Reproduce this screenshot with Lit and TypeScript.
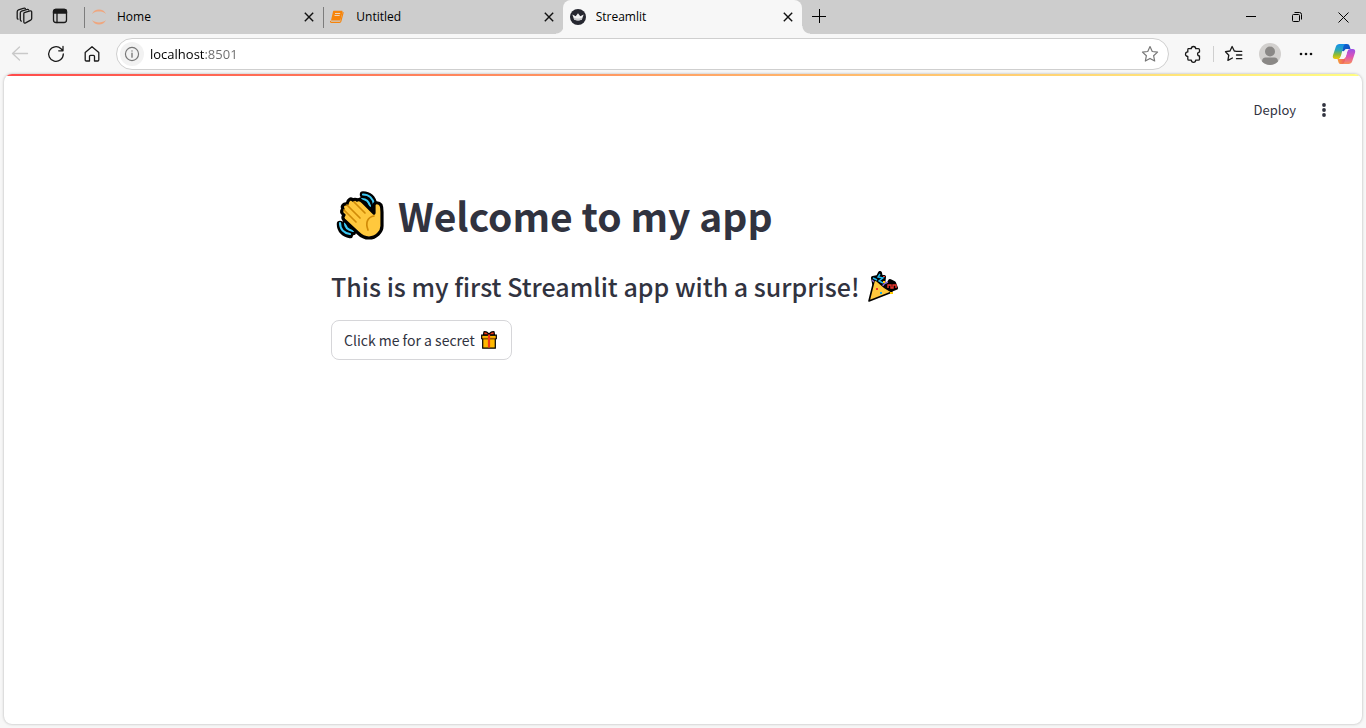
import { LitElement, html, css, svg } from "lit";
import { customElement, property, state } from "lit/decorators.js";
import { classMap } from "lit/directives/class-map.js";

const closeIcon = html`<svg width="10" height="10" viewBox="0 0 10 10" fill="none" stroke="#111" stroke-width="1.4" aria-hidden="true"><path d="M.8.8l8.4 8.4M9.2.8L.8 9.2" /></svg>`;

const jupyterIcon = html`<svg width="16" height="16" viewBox="0 0 16 16" fill="#efa67e" aria-hidden="true">
  <path d="M1 5C2.300 1.700 5 .5 8 .5S13.700 1.700 15 5C13 3.200 10.700 2.600 8 2.600S3 3.200 1 5z" />
  <path d="M1 11c1.300 3.300 4 4.500 7 4.500s5.700-1.200 7-4.500c-2 1.800-4.300 2.400-7 2.400S3 12.800 1 11z" />
</svg>`;

const notebookIcon = html`<svg width="16" height="16" viewBox="0 0 16 16" aria-hidden="true">
  <path d="M3.900 1.800h7.800c.7 0 1 .5.800 1.200l-2 7.700c-.2.600-.6.900-1.200.9H1L2.900 3c.1-.7.400-1.200 1-1.200z" fill="#f78409" />
  <path d="M13.200 3.200l-2.400 9.200c-.2.700-.6 1-1.200 1H1.500c-.8 0-1.200-.7-1-1.500" fill="none" stroke="#f78409" stroke-width="1.200" />
  <path d="M5 4.500h5.200M4.500 6.500h5.200" stroke="#f0d4b5" stroke-width="1" />
</svg>`;

const crownIcon = html`<svg width="16" height="16" viewBox="0 0 16 16" aria-hidden="true">
  <circle cx="8" cy="8" r="8" fill="#262730" />
  <path d="M2.300 5.600l3.400 1.700L8 4.200l2.300 3.100 3.400-1.700-2 5.200c-2.400.8-5 .8-7.400 0z" fill="#f2f2f3" />
  <path d="M3.500 8.700c3 1.100 6 1.100 9 0l-.8 2.100c-2.400.8-5 .8-7.400 0z" fill="#c9c9cc" />
</svg>`;

const line = (size: number, body: unknown, color = "#1a1a1a") => html`<svg
  width=${size} height=${size} viewBox="0 0 20 20" fill="none" stroke=${color}
  stroke-width="1.300" stroke-linejoin="round" stroke-linecap="round" aria-hidden="true">${body}</svg>`;

const workspacesIcon = line(20, svg`<path d="M10.300 6.600l5.700-1.700c1-.3 1.700.2 1.700 1.200v6.300c0 .8-.4 1.300-1.100 1.700l-5 2.800c-1 .5-1.800 0-1.800-1.100V8.100c0-.8-.1-1.200.5-1.500z"/><path d="M7.300 15.200c-.7-.2-1-.7-1-1.400V7c0-1 .4-1.600 1.300-1.900l5.600-1.700c.6-.2 1.100 0 1.400.4"/><path d="M4 13.200c-.5-.2-.8-.7-.8-1.300V5.700c0-1 .4-1.600 1.300-1.900l5.500-1.600c.6-.2 1.100 0 1.400.4"/>`);
const tabActionsIcon = line(20, svg`<rect x="3.500" y="3.500" width="13" height="13" rx="2.500"/><path d="M3.500 7V5.500a2 2 0 0 1 2-2h9a2 2 0 0 1 2 2V7z" fill="#1a1a1a"/><path d="M7 7v9.500"/>`);
const backIcon = line(20, svg`<path d="M17.500 9.500H2.500M9.500 3l-7 6.500 7 6.500"/>`, "#c9c9c9");
const reloadIcon = line(20, svg`<path d="M17.300 10A7.300 7.300 0 1 1 15 4.700L16.800 6.500M17 2.500v4.300h-4.300"/>`);
const homeIcon = line(20, svg`<path d="M3.200 8.600L10 2.700l6.800 5.900v7.200c0 .8-.5 1.200-1.200 1.200h-3.100v-4.500c0-.7-.4-1.100-1-1.100h-3c-.6 0-1 .4-1 1.100V17H4.400c-.8 0-1.200-.4-1.200-1.200z"/>`);
const infoIcon = line(18, svg`<circle cx="10" cy="10" r="7.300"/><path d="M10 9.200v4.300M10 6.500v.2" stroke-width="1.500"/>`, "#767676");
const starIcon = line(18, svg`<path d="M10 1.800l2.500 5.400 5.900.7-4.400 4 1.200 5.900L10 14.900l-5.200 2.900L6 11.900l-4.400-4 5.900-.7z"/>`, "#767676");
const puzzleIcon = line(20, svg`<path d="M5.200 4.700h3.100a2.200 2.200 0 0 1 4.400 0h2.600c.7 0 1.200.5 1.200 1.200v2.200a1.900 1.900 0 1 0 0 3.800v3c0 .7-.5 1.200-1.200 1.200h-2.600a2.200 2.200 0 0 1-4.400 0H6c-.7 0-1.200-.5-1.200-1.200v-2.400a2.300 2.300 0 0 1 0-4.600V5.900c0-.7 0-1.200.4-1.200z"/>`);
const favoritesIcon = line(20, svg`<path d="M11.800 7.300h6M12.500 11h5.300M12.500 14.700h5.300M11.500 7.200l-1.200-.2L8.100 2.500 6 7l-4.500.7 3.300 3.500-.9 5.200 4.500-2.400"/>`);

const copilotIcon = html`<svg width="24" height="24" viewBox="0 0 24 24" aria-hidden="true">
  <defs>
    <linearGradient id="cp-left" x1="0" y1="0" x2="0" y2="1"><stop offset="0" stop-color="#1590ea" /><stop offset=".4" stop-color="#2ba8b8" /><stop offset=".7" stop-color="#8dbb35" /><stop offset="1" stop-color="#f2c90a" /></linearGradient>
    <linearGradient id="cp-right" x1="0" y1="0" x2="0" y2="1"><stop offset="0" stop-color="#9b50e8" /><stop offset=".5" stop-color="#dc54b6" /><stop offset="1" stop-color="#fa9058" /></linearGradient>
    <linearGradient id="cp-top" x1="0" y1="0" x2="1" y2="1"><stop offset="0" stop-color="#0b65d8" /><stop offset="1" stop-color="#174fb9" /></linearGradient>
    <linearGradient id="cp-bottom" x1="0" y1="0" x2="1" y2="0"><stop offset="0" stop-color="#f5a33c" /><stop offset="1" stop-color="#ee5169" /></linearGradient>
  </defs>
  <path d="M11 2h4c1.500 0 2.300.9 2.700 2.300L18.500 7h-3c-1.800 0-2.700.8-3.200 2.300L10 9z" fill="url(#cp-top)" />
  <path d="M13 22H9c-1.500 0-2.300-.9-2.700-2.300L5.500 17h3c1.800 0 2.700-.8 3.200-2.300L14 15z" fill="url(#cp-bottom)" />
  <path d="M7.500 2h6c-1.200.5-1.700 1.400-2.100 2.800L8.800 14.200C8.200 16.300 7.200 17 5.500 17H3.300C1.200 17 .3 15.400 1 13.200L3.800 4.800C4.400 3 5.700 2 7.500 2z" fill="url(#cp-left)" />
  <path d="M16.500 22h-6c1.200-.5 1.700-1.400 2.100-2.800l2.600-9.400C15.800 7.700 16.800 7 18.500 7h2.200c2.100 0 3 1.600 2.300 3.800l-2.800 8.400C19.600 21 18.300 22 16.500 22z" fill="url(#cp-right)" />
  <path d="M12.300 9.300c.4-1.500 1.400-2.300 3.200-2.300h1.200c-.9.500-1.200 1.300-1.500 2.500l-1.500 5.200c-.5 1.500-1.400 2.300-3.200 2.300H7.300c.8-.5 1.200-1.300 1.500-2.500z" fill="#f7f7f7" />
</svg>`;

const waveEmoji = html`<svg width="48" height="50" viewBox="0 0 48 50" role="img" aria-label="Waving hand">
  <g fill="none" stroke-linecap="round">
    <g stroke="#000" stroke-width="6.500"><path d="M27 4.500c6 0 10 4 11 10M26 10c4 0 7 3 8 7M4 34c0 6 4 10 10 11M9 34c0 4 3 7 8 8" /></g>
    <g stroke="#3cc8f4" stroke-width="2.200"><path d="M27 4.500c6 0 10 4 11 10M26 9c4 0 7 3 8 7M4 33c0 6 4 10 10 11M9 33c0 4 3 7 8 8" /></g>
  </g>
  <path d="M21 10c2-1 4 0 6 2l11 11V15c.5-3 5-3 7 0 1 2 1 4 1 7v14c0 6-6 12-13 12-5 0-8-2-11-5L8 30c-2-2-1-4 0-5-3-2-3-4-1-6-2-3 1-6 4-5 1-5 4-6 6-4 1-1 3-1 4 0z" fill="#ffc83d" stroke="#000" stroke-width="3.200" stroke-linejoin="round" />
  <path d="M18 12l11 11M11 15l13 13M8 20l12 12" fill="none" stroke="#d08a08" stroke-width="1.700" stroke-linecap="round" />
  <path d="M38 26c-6 1-9 6-6 14" fill="none" stroke="#d08a08" stroke-width="1.700" stroke-linecap="round" />
</svg>`;

const partyEmoji = html`<svg width="32" height="32" viewBox="0 0 32 32" role="img" aria-label="Party popper">
  <g stroke="#000" stroke-width="4" fill="#000" stroke-linejoin="round"><path d="M6 7l5-1 2-4 1 5 3-1-1 8 4 1 3-5 4 2 2 5-5 2-9-1-3 6-5-12z" /></g>
  <path d="M7 10L2 30l23-9c-4-2-12-8-15-11-1-1-2-1-3 0z" fill="#ffc83d" stroke="#000" stroke-width="1.600" stroke-linejoin="round" />
  <g fill="none" stroke-width="1.400">
    <path d="M13 3l-2 3 5 1-4 3 4 2M6 7l4 2" stroke="#21b8ee" />
    <path d="M21 17v-3h3v3h2v-3h3v3" stroke="#f03a31" />
    <path d="M16 15c0-2 2-3 5-4M5 9l2 2" stroke="#8467cf" />
  </g>
  <path d="M13 21h2v2h-2z" fill="#15a9e4" /><path d="M9 17h2v2H9zM16 5h2v1h-2z" fill="#f03a31" /><path d="M16 10h2v2h-2zM23 21h3v2h-3z" fill="#fc0" />
</svg>`;

const giftEmoji = html`<svg width="16" height="18" viewBox="0 0 16 18" role="img" aria-label="Gift">
  <path d="M1.700 7.500h12.600v9.700H1.700z" fill="#ffb900" stroke="#000" stroke-width="1.200" />
  <path d="M.7 4.200h14.600v3.500H.7z" fill="#ffb900" stroke="#000" stroke-width="1.200" />
  <path d="M1.500 7.200h13" stroke="#d67d00" stroke-width="1" />
  <path d="M3 .8C5 .2 7 2 8 3c1-1 3-2.800 5-2.200l.5 3h-11z" fill="#f03a17" stroke="#000" stroke-width="1.200" />
  <path d="M6.900 3.500h2.200v13H6.900z" fill="#f03a17" />
</svg>`;

interface Tab { title: string; icon: unknown; }

const TABS: Tab[] = [
  { title: "Home", icon: jupyterIcon },
  { title: "Untitled", icon: notebookIcon },
  { title: "Streamlit", icon: crownIcon },
];

const buttonReset = css`
  * { box-sizing: border-box; }
  button {
    display: flex; align-items: center; justify-content: center;
    margin: 0; padding: 0; border: 0; background: none; color: inherit; font: inherit;
  }
  svg { display: block; flex: none; }
`;

@customElement("browser-tabs")
export class BrowserTabs extends LitElement {
  @state() private active = 2;

  static styles = [buttonReset, css`
    :host { display: flex; height: 34px; background: #cdcdcd; color: #000; font: 12px/16px "Open Sans", "Noto Sans", sans-serif; }
    .tools { display: flex; flex: none; width: 84px; padding-left: 6px; }
    .tools button { width: 36px; height: 32px; }
    .tabs { display: flex; flex: 0 1 718px; min-width: 0; }
    .tab { display: flex; flex: 1 1 0; min-width: 0; align-items: center; gap: 10px; padding: 0 7px 0 6px; border-left: 1px solid transparent; border-image: linear-gradient(transparent 8px, #7d7d7d 8px, #7d7d7d 27px, transparent 27px) 1; }
    .tab.active { position: relative; border-image: none; border-radius: 8px 8px 0 0; background: #f7f7f7 border-box; }
    .tab.active::before, .tab.active::after { content: ""; position: absolute; bottom: 0; width: 8px; height: 8px; }
    .tab.active::before { right: 100%; background: radial-gradient(circle at 0 0, transparent 7px, #f7f7f7 8px); }
    .tab.active::after { left: 100%; background: radial-gradient(circle at 100% 0, transparent 7px, #f7f7f7 8px); }
    .title { flex: 1; min-width: 0; justify-content: flex-start; white-space: nowrap; overflow: hidden; }
    .close { width: 14px; height: 20px; }
    .new { width: 34px; height: 32px; }
    .window { display: flex; margin-left: auto; }
    .window button { width: 46px; height: 34px; }
  `];

  render() {
    return html`
      <div class="tools">
        <button aria-label="Workspaces">${workspacesIcon}</button>
        <button aria-label="Tab actions">${tabActionsIcon}</button>
      </div>
      <div class="tabs">
        ${TABS.map((tab, i) => html`
          <div class=${classMap({ tab: true, active: i === this.active })}>
            ${tab.icon}
            <button class="title" @click=${() => (this.active = i)}>${tab.title}</button>
            <button class="close" aria-label="Close ${tab.title}">${closeIcon}</button>
          </div>`)}
      </div>
      <button class="new" aria-label="New tab">
        <svg width="14" height="14" viewBox="0 0 14 14" stroke="#000"><path d="M0 7.500h14M7.500 0v14" /></svg>
      </button>
      <div class="window">
        <button aria-label="Minimize"><svg width="10" height="10" viewBox="0 0 10 10" stroke="#000"><path d="M0 4.500h10" /></svg></button>
        <button aria-label="Restore"><svg width="10" height="10" viewBox="0 0 10 10" fill="none" stroke="#000"><rect x=".5" y="2.500" width="7" height="7" rx="1" /><path d="M2.500.5h5a2 2 0 0 1 2 2v5" /></svg></button>
        <button aria-label="Close window"><svg width="11" height="11" viewBox="0 0 11 11" stroke="#000"><path d="M.5.5l10 10M10.500.5l-10 10" /></svg></button>
      </div>`;
  }
}

@customElement("browser-toolbar")
export class BrowserToolbar extends LitElement {
  @property() url = "";

  static styles = [buttonReset, css`
    :host { display: flex; height: 40px; align-items: center; padding: 0 4px 0 2px; background: #f7f7f7; }
    .nav { width: 36px; height: 32px; }
    .address { display: flex; flex: 1; min-width: 0; height: 32px; align-items: center; margin: 0 6px; padding: 0 9px 0 3px; border: 1px solid #cfcfcf; border-radius: 16px; background: #fff; }
    .site { width: 24px; height: 24px; border-radius: 12px; background: #f2f2f2; }
    .url {
      flex: 1; min-width: 0; margin: 0; padding: 0 0 0 6px; border: 0; outline: 0;
      font: 13px/20px "Open Sans", "Noto Sans", sans-serif; color: transparent;
      background: linear-gradient(90deg, #000 60px, #6a6a6a 60px); background-clip: text; -webkit-background-clip: text;
    }
    .divider { width: 1px; height: 16px; margin: 0 2px; background: #cfcfcf; }
    .nav.copilot { margin-left: 2px; }
  `];

  render() {
    return html`
      <button class="nav" aria-label="Back" disabled>${backIcon}</button>
      <button class="nav" aria-label="Refresh">${reloadIcon}</button>
      <button class="nav" aria-label="Home">${homeIcon}</button>
      <div class="address">
        <button class="site" aria-label="Site information">${infoIcon}</button>
        <input class="url" type="text" aria-label="Address" .value=${this.url} />
        <button aria-label="Add to favorites">${starIcon}</button>
      </div>
      <button class="nav" aria-label="Extensions">${puzzleIcon}</button>
      <span class="divider"></span>
      <button class="nav" aria-label="Favorites">${favoritesIcon}</button>
      <button class="nav" aria-label="Profile">
        <svg width="22" height="22" viewBox="0 0 22 22"><circle cx="11" cy="11" r="11" fill="#d2d0ce" /><circle cx="11" cy="8.500" r="5" fill="#8a8886" /><path d="M3 18.500c0-2.500 1.500-4 3.500-4h9c2 0 3.500 1.500 3.500 4A11 11 0 0 1 3 18.500z" fill="#8a8886" /></svg>
      </button>
      <button class="nav" aria-label="Settings and more">
        <svg width="14" height="4" viewBox="0 0 14 4" fill="#111"><circle cx="2" cy="2" r="1.300" /><circle cx="7" cy="2" r="1.300" /><circle cx="12" cy="2" r="1.300" /></svg>
      </button>
      <button class="nav copilot" aria-label="Copilot">${copilotIcon}</button>`;
  }
}

@customElement("welcome-page")
export class WelcomePage extends LitElement {
  static styles = [buttonReset, css`
    :host { display: flex; flex-direction: column; overflow: hidden; border-radius: 8px; background: #fff; box-shadow: 0 0 3px rgba(0, 0, 0, 0.28); color: #31333f; font-family: "Noto Sans CJK JP", sans-serif; }
    .decoration { flex: none; height: 2px; background: linear-gradient(90deg, #ff4b4b, #fffd80); }
    .header { display: flex; align-items: center; justify-content: flex-end; gap: 20px; padding: 22px 30px 0 0; font-size: 13px; line-height: 24px; }
    .menu { width: 16px; height: 24px; }
    .content { display: flex; flex-direction: column; align-items: flex-start; width: 100%; max-width: 736px; margin: 0 auto; padding: 65px 16px; }
    h1, h2 { display: flex; align-items: center; margin: 0; }
    h1 { gap: 14px; padding-left: 5px; font-size: 39px; line-height: 56px; font-weight: 700; }
    h2 { gap: 8px; margin: 26px 0 16px; font-size: 25px; line-height: 35px; font-weight: 500; }
    .secret { gap: 6px; height: 40px; padding: 0 14px 0 12px; border: 1px solid #d6d6d9; border-radius: 8px; background: #fff; font-size: 14px; line-height: 24px; }
  `];

  render() {
    return html`
      <div class="decoration"></div>
      <header class="header">
        <button>Deploy</button>
        <button class="menu" aria-label="Main menu">
          <svg width="4" height="14" viewBox="0 0 4 14" fill="#31333f"><circle cx="2" cy="2" r="1.900" /><circle cx="2" cy="7" r="1.900" /><circle cx="2" cy="12" r="1.900" /></svg>
        </button>
      </header>
      <main class="content">
        <h1>${waveEmoji}<span>Welcome to my app</span></h1>
        <h2><span>This is my first Streamlit app with a surprise!</span>${partyEmoji}</h2>
        <button class="secret">Click me for a secret ${giftEmoji}</button>
      </main>`;
  }
}

@customElement("app-root")
export class AppRoot extends LitElement {
  static styles = css`
    :host { display: flex; flex-direction: column; min-height: 100vh; background: #f7f7f7; }
    .page { flex: 1; margin: 0 4px 4px; }
  `;

  render() {
    return html`
      <browser-tabs></browser-tabs>
      <browser-toolbar url="localhost:8501"></browser-toolbar>
      <welcome-page class="page"></welcome-page>`;
  }
}
